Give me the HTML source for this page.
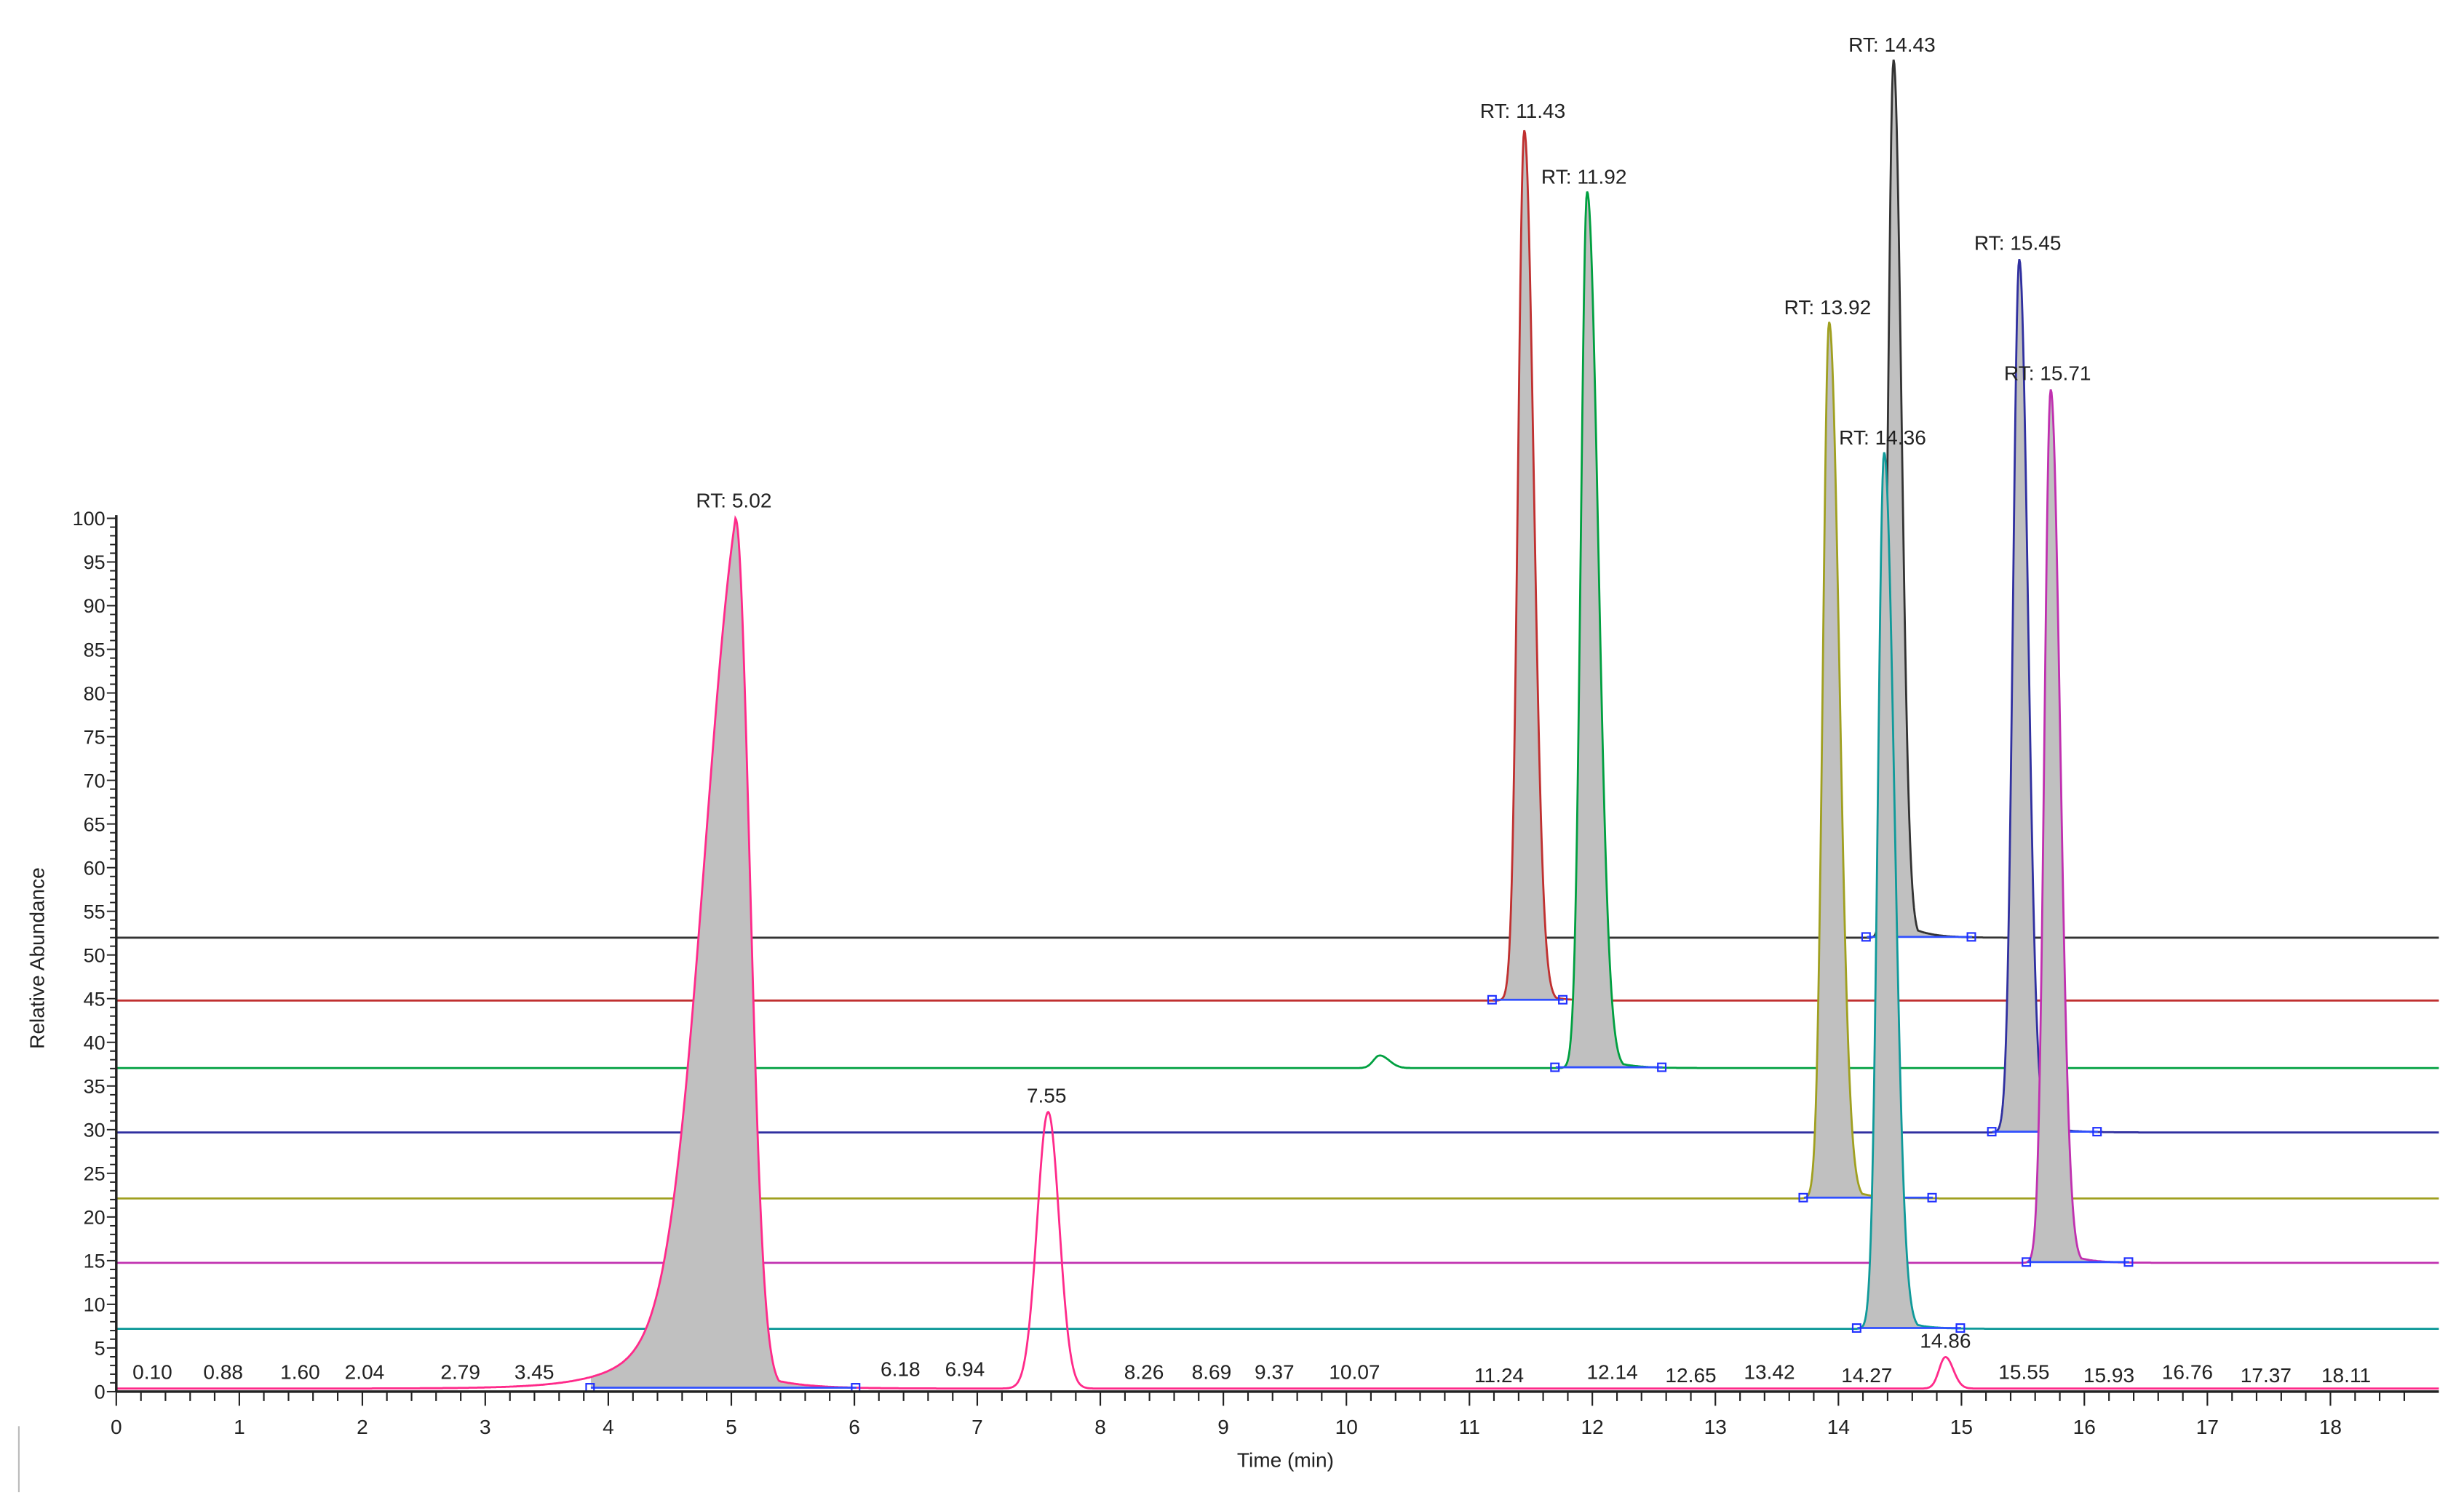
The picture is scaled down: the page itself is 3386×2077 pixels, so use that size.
<!DOCTYPE html>
<html><head><meta charset="utf-8"><style>
html,body{margin:0;padding:0;background:#fff;}
svg{display:block;}
text{font-family:"Liberation Sans",Arial,sans-serif;fill:#222;}
</style></head><body>
<svg id="s" width="3386" height="2077" viewBox="0 0 1568 962" preserveAspectRatio="none" xmlns="http://www.w3.org/2000/svg">
<rect width="1568" height="962" fill="#fff"/>
<g id="g"></g>
<line x1="12" y1="908" x2="12" y2="950" stroke="#bbb" stroke-width="1"/>
<text x="28" y="610" font-size="13" text-anchor="middle" transform="rotate(-90 28 610)">Relative Abundance</text>
<text x="818" y="934" font-size="13" text-anchor="middle">Time (min)</text>
<g font-size="13" text-anchor="middle">
<text x="969" y="75">RT: 11.43</text>
<text x="1008" y="117">RT: 11.92</text>
<text x="1163" y="200">RT: 13.92</text>
<text x="1198" y="283">RT: 14.36</text>
<text x="1204" y="33">RT: 14.43</text>
<text x="1284" y="159">RT: 15.45</text>
<text x="1303" y="242">RT: 15.71</text>
<text x="467" y="323">RT: 5.02</text>
<text x="666" y="702">7.55</text>
<text x="1238" y="858">14.86</text>
<text x="97" y="878">0.10</text><text x="142" y="878">0.88</text><text x="191" y="878">1.60</text><text x="232" y="878">2.04</text><text x="293" y="878">2.79</text><text x="340" y="878">3.45</text><text x="573" y="876">6.18</text><text x="614" y="876">6.94</text><text x="728" y="878">8.26</text><text x="771" y="878">8.69</text><text x="811" y="878">9.37</text><text x="862" y="878">10.07</text><text x="954" y="880">11.24</text><text x="1026" y="878">12.14</text><text x="1076" y="880">12.65</text><text x="1126" y="878">13.42</text><text x="1188" y="880">14.27</text><text x="1288" y="878">15.55</text><text x="1342" y="880">15.93</text><text x="1392" y="878">16.76</text><text x="1442" y="880">17.37</text><text x="1493" y="880">18.11</text>
</g>
</svg>
<script>
var g=document.getElementById('g'),h='';
var X0=74,XS=(1483-74)/18,Y0=886,YS=(886-330)/100,XR=1552;
var traces=[
 {b:597,c:'#333',pk:[{c:1205,h:559,sl:3.5,sr:5,t:0.03,tau:12,f0:1188,f1:1255}]},
 {b:637,c:'#c03030',pk:[{c:970,h:554,sl:4,sr:6,t:0.03,tau:9,f0:950,f1:995}]},
 {b:680,c:'#00a040',pk:[{c:1010,h:558,sl:4,sr:7,t:0.03,tau:12,f0:990,f1:1058},{c:878,h:8,sl:4,sr:6,t:0,tau:1}]},
 {b:721,c:'#3030a0',pk:[{c:1285,h:556,sl:4,sr:5.5,t:0.02,tau:14,f0:1268,f1:1335}]},
 {b:763,c:'#a0a020',pk:[{c:1164,h:558,sl:4,sr:6.5,t:0.03,tau:12,f0:1148,f1:1230}]},
 {b:804,c:'#c030b0',pk:[{c:1305,h:556,sl:4,sr:6,t:0.03,tau:11,f0:1290,f1:1355}]},
 {b:846,c:'#109a9a',pk:[{c:1199,h:558,sl:4,sr:6.5,t:0.03,tau:11,f0:1182,f1:1248}]},
 {b:884,c:'#ff2a8a',pk:[{c:468,h:554,sl:22,sr:9,t:0.03,tau:22,f0:376,f1:545,lap:0.35,ll:28},{c:667,h:176,sl:7,sr:7,t:0,tau:1},{c:1238,h:20,sl:4,sr:5,t:0,tau:1}]}
];
function val(p,x){var d=x-p.c;
 if(d<0){var gg=Math.exp(-d*d/(2*p.sl*p.sl));if(p.lap){gg=(1-p.lap)*gg+p.lap*Math.exp(d/p.ll);}return p.h*gg;}
 return p.h*Math.max(Math.exp(-d*d/(2*p.sr*p.sr)),p.t*Math.exp(-d/p.tau));}
traces.forEach(function(t){
 var pts=[];for(var x=X0;x<=XR;x+=0.5){var y=0;t.pk.forEach(function(p){y+=val(p,x);});pts.push([x,t.b-y]);}
 t.pk.forEach(function(p){if(p.f0){var d='M'+p.f0+' '+t.b;pts.forEach(function(q){if(q[0]>=p.f0&&q[0]<=p.f1)d+='L'+q[0]+' '+q[1].toFixed(1);});d+='L'+p.f1+' '+t.b+'Z';h+='<path d="'+d+'" fill="#c0c0c0"/>';}});
 var d='M'+pts.map(function(q){return q[0]+' '+q[1].toFixed(1);}).join('L');
 h+='<path d="'+d+'" fill="none" stroke="'+t.c+'" stroke-width="1.3"/>';
 t.pk.forEach(function(p){if(p.f0){h+='<line x1="'+p.f0+'" y1="'+(t.b-0.5)+'" x2="'+p.f1+'" y2="'+(t.b-0.5)+'" stroke="#3050ff" stroke-width="1.3"/>';h+='<rect x="'+(p.f0-3)+'" y="'+(t.b-3)+'" width="5" height="5" fill="none" stroke="#2030ff" stroke-width="1"/><rect x="'+(p.f1-3)+'" y="'+(t.b-3)+'" width="5" height="5" fill="none" stroke="#2030ff" stroke-width="1"/>';}});
});
h+='<line x1="'+X0+'" y1="'+Y0+'" x2="'+XR+'" y2="'+Y0+'" stroke="#222" stroke-width="1.6"/>';
h+='<line x1="'+X0+'" y1="328" x2="'+X0+'" y2="'+Y0+'" stroke="#222" stroke-width="1.6"/>';
for(var i=0;i<=18*5+3;i++){var x=X0+i*XS/5;if(x>XR)break;var maj=i%5==0;h+='<line x1="'+x.toFixed(1)+'" y1="'+Y0+'" x2="'+x.toFixed(1)+'" y2="'+(Y0+(maj?9:6))+'" stroke="#222" stroke-width="1"/>';if(maj)h+='<text x="'+x.toFixed(1)+'" y="'+(Y0+27)+'" font-size="13" text-anchor="middle">'+(i/5)+'</text>';}
for(var v=0;v<=100;v++){var y=Y0-v*YS;var maj=v%5==0;h+='<line x1="'+(X0-(maj?6:4))+'" y1="'+y.toFixed(1)+'" x2="'+X0+'" y2="'+y.toFixed(1)+'" stroke="#222" stroke-width="0.9"/>';if(maj)h+='<text x="'+(X0-7)+'" y="'+(y+4.5).toFixed(1)+'" font-size="12.5" text-anchor="end">'+v+'</text>';}
g.innerHTML=h;
</script>
</body></html>
